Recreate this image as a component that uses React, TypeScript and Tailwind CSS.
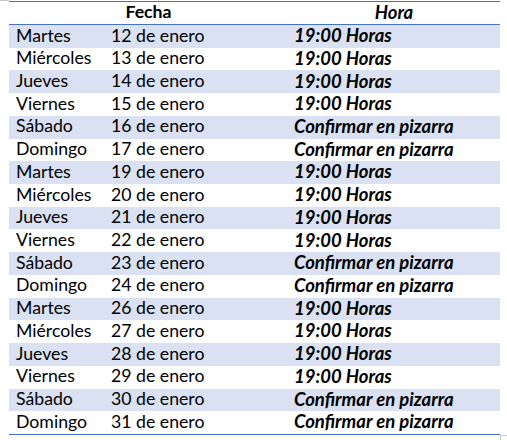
const rows: [string, string, string][] = [
  ["Martes", "12 de enero", "19:00 Horas"],
  ["Miércoles", "13 de enero", "19:00 Horas"],
  ["Jueves", "14 de enero", "19:00 Horas"],
  ["Viernes", "15 de enero", "19:00 Horas"],
  ["Sábado", "16 de enero", "Confirmar en pizarra"],
  ["Domingo", "17 de enero", "Confirmar en pizarra"],
  ["Martes", "19 de enero", "19:00 Horas"],
  ["Miércoles", "20 de enero", "19:00 Horas"],
  ["Jueves", "21 de enero", "19:00 Horas"],
  ["Viernes", "22 de enero", "19:00 Horas"],
  ["Sábado", "23 de enero", "Confirmar en pizarra"],
  ["Domingo", "24 de enero", "Confirmar en pizarra"],
  ["Martes", "26 de enero", "19:00 Horas"],
  ["Miércoles", "27 de enero", "19:00 Horas"],
  ["Jueves", "28 de enero", "19:00 Horas"],
  ["Viernes", "29 de enero", "19:00 Horas"],
  ["Sábado", "30 de enero", "Confirmar en pizarra"],
  ["Domingo", "31 de enero", "Confirmar en pizarra"],
];

export default function App() {
  return (
    <div className="w-[507px] h-[440px] bg-white text-black font-['Lato',sans-serif] text-[17.7px] leading-none">
      {/* excel gridline bit */}
      <div className="w-[9px] h-px bg-[#c8c8c8]" />

      <div className="ml-[9px] w-[491px] border-t border-b border-[#4472c4]">
        <div className="flex h-[23px] items-center pb-[2px] border-b border-[#4472c4] font-bold">
          <div className="w-[279px] text-center">Fecha</div>
          <div className="flex-1 text-center italic text-[18.5px]">Hora</div>
        </div>

        {rows.map(([day, date, hour], i) => (
          <div
            key={i}
            className={`flex h-[22.72px] items-center pb-[2px] ${i % 2 === 0 ? "bg-[#d9e1f2]" : "bg-white"}`}
          >
            <div className="w-[102px] pl-[7px]">{day}</div>
            <div className="w-[177px]">{date}</div>
            <div className="flex-1 pl-[6px] font-bold italic text-[18.5px]">{hour}</div>
          </div>
        ))}
      </div>

      <div className="flex">
        <div className="w-[500px]" />
        <div className="w-[7px] h-[5px] border-l border-t border-[#c8c8c8]" />
      </div>
    </div>
  );
}
